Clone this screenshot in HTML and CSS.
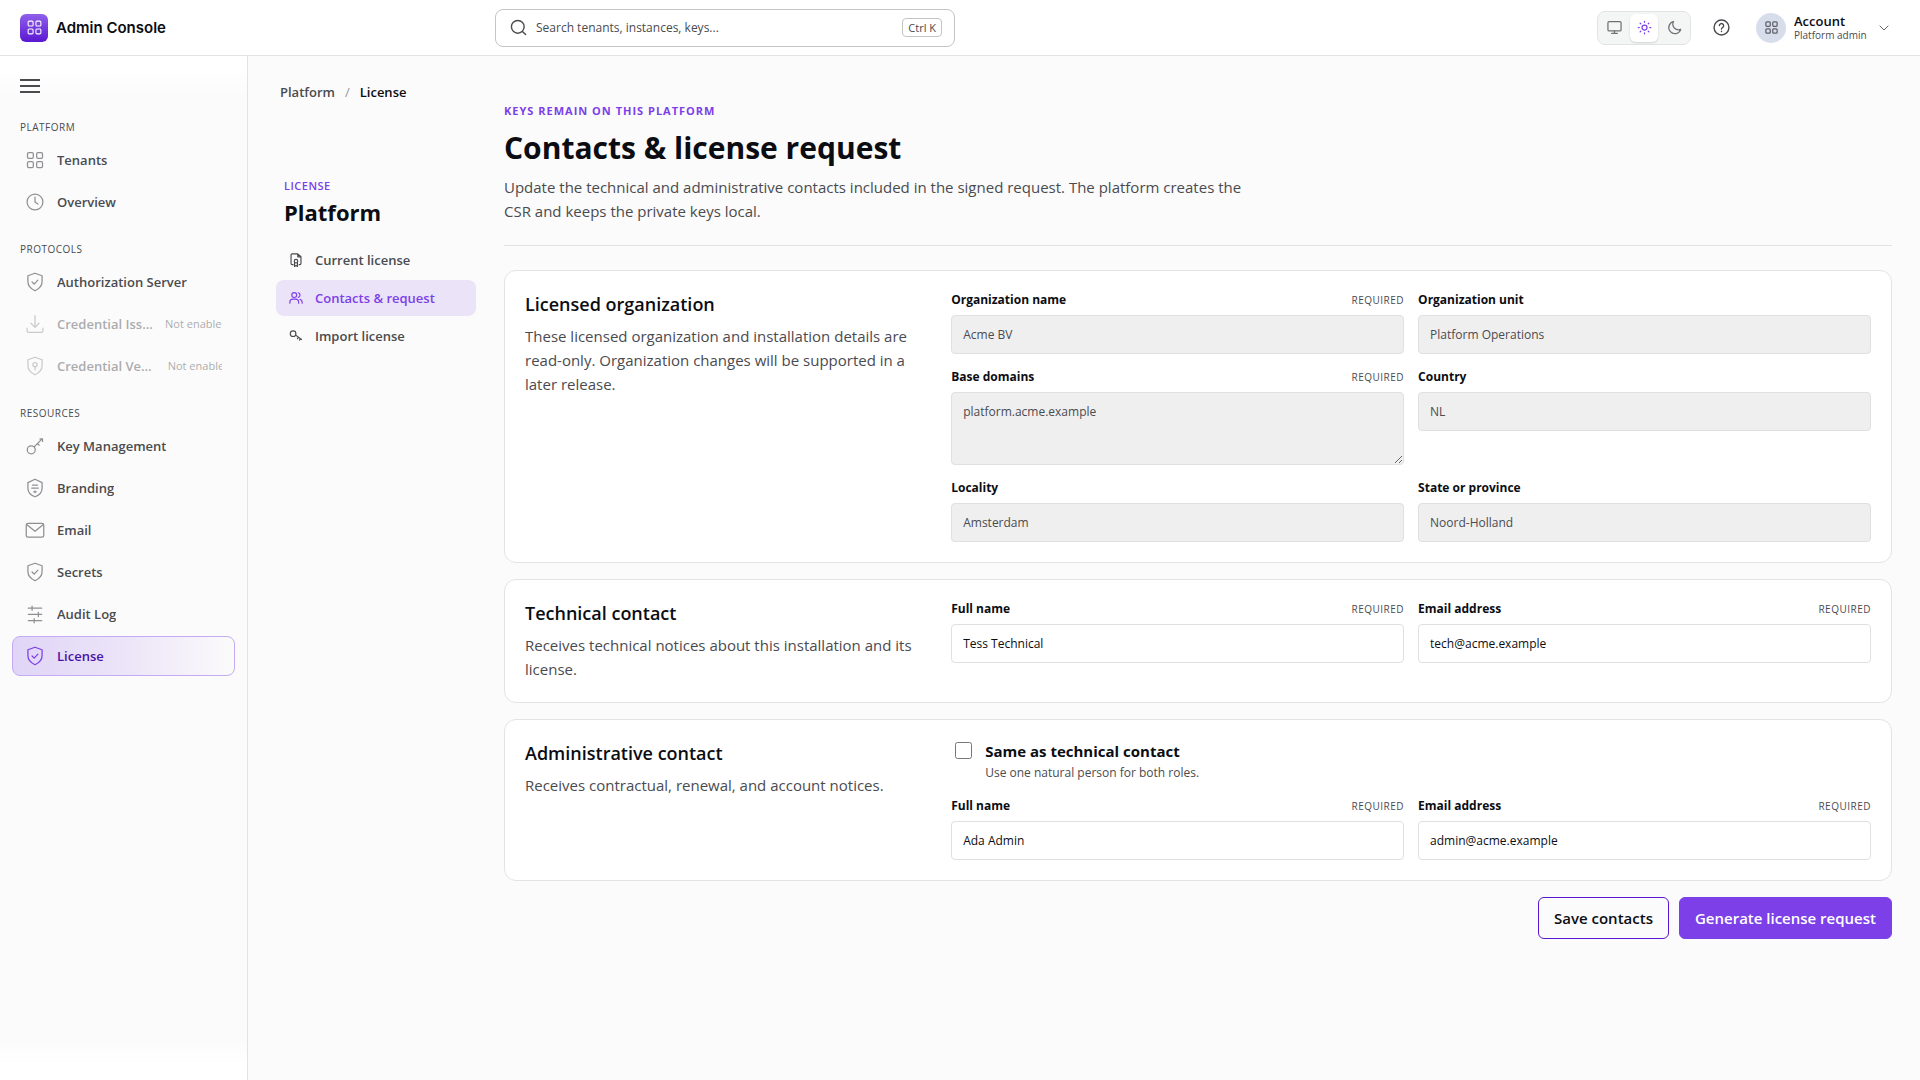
FILE: index.html
```html
<!DOCTYPE html>
<html lang="en">
<head>
    <meta charset="UTF-8">
    <meta name="viewport" content="width=device-width, initial-scale=1.0">
    <title>Contacts &amp; license request - Admin Console</title>
    <link rel="stylesheet" href="styles.css">
</head>
<body>
    <!-- shared icons -->
    <svg class="sprite" aria-hidden="true">
        <symbol id="icon-grid" viewBox="0 0 24 24">
            <rect x="3" y="3" width="7" height="7" rx="1.5"/>
            <rect x="14" y="3" width="7" height="7" rx="1.5"/>
            <rect x="3" y="14" width="7" height="7" rx="1.5"/>
            <rect x="14" y="14" width="7" height="7" rx="1.5"/>
        </symbol>
        <symbol id="icon-shield-check" viewBox="0 0 24 24">
            <path d="M12 1.500l8.500 3v7c0 5-3.200 8.700-8.500 11-5.300-2.300-8.500-6-8.500-11v-7z"/>
            <path d="M8.500 12l2.500 2.500 4.500-4.700"/>
        </symbol>
    </svg>

    <header class="topbar">
        <a class="brand" href="#">
            <span class="brand-mark"><svg class="icon"><use href="#icon-grid"/></svg></span>
            Admin Console
        </a>
        <div class="search">
            <svg class="icon" viewBox="0 0 24 24"><circle cx="11" cy="11" r="9"/><path d="M17.500 17.500L22 22"/></svg>
            <input type="search" placeholder="Search tenants, instances, keys..." aria-label="Search">
            <kbd>Ctrl K</kbd>
        </div>
        <div class="topbar-actions">
            <div class="theme-switch">
                <button type="button" aria-label="System theme">
                    <svg class="icon" viewBox="0 0 24 24"><rect x="1.500" y="2.500" width="21" height="15" rx="2"/><path d="M12 17.500v4M7.500 21.500h9"/></svg>
                </button>
                <button type="button" class="active" aria-label="Light theme">
                    <svg class="icon" viewBox="0 0 24 24"><circle cx="12" cy="12" r="4"/><path d="M12 2v1.500M12 20.500V22M2 12h1.500M20.500 12H22M5 5l1 1M18 18l1 1M5 19l1-1M18 6l1-1"/></svg>
                </button>
                <button type="button" aria-label="Dark theme">
                    <svg class="icon" viewBox="0 0 24 24"><path d="M10.500 2.500a9.800 9.800 0 1 0 11.500 12.500A9 9 0 0 1 10.500 2.500z"/></svg>
                </button>
            </div>
            <button type="button" class="help" aria-label="Help">
                <svg class="icon" viewBox="0 0 24 24"><circle cx="12" cy="12" r="10.500"/><path d="M9 9.300a3 3 0 1 1 4.500 2.700c-1 .6-1.500 1.100-1.500 2.200M12 17.300v.4"/></svg>
            </button>
            <button type="button" class="account">
                <span class="avatar"><svg class="icon"><use href="#icon-grid"/></svg></span>
                <span class="account-text">
                    <span class="account-name">Account</span>
                    <span class="account-role">Platform admin</span>
                </span>
                <svg class="icon chevron" viewBox="0 0 24 24"><path d="M5 8.500l7 7 7-7"/></svg>
            </button>
        </div>
    </header>

    <div class="layout">
        <aside class="sidebar">
            <button type="button" class="menu-toggle" aria-label="Toggle navigation">
                <svg viewBox="0 0 20 24"><path d="M0 6h20M0 12h20M0 18h20"/></svg>
            </button>

            <nav>
                <h2 class="nav-title">Platform</h2>
                <a class="nav-item" href="#">
                    <svg class="icon"><use href="#icon-grid"/></svg>
                    <span class="nav-label">Tenants</span>
                </a>
                <a class="nav-item" href="#">
                    <svg class="icon" viewBox="0 0 24 24"><circle cx="12" cy="12" r="9.500"/><path d="M12 6v6l3.500 2.500"/></svg>
                    <span class="nav-label">Overview</span>
                </a>

                <h2 class="nav-title">Protocols</h2>
                <a class="nav-item" href="#">
                    <svg class="icon"><use href="#icon-shield-check"/></svg>
                    <span class="nav-label">Authorization Server</span>
                </a>
                <a class="nav-item disabled" aria-disabled="true">
                    <svg class="icon" viewBox="0 0 24 24"><path d="M12 2v14M7 11l5 5 5-5M2.500 17v3a2 2 0 0 0 2 2h15a2 2 0 0 0 2-2v-3"/></svg>
                    <span class="nav-label">Credential Issuer</span>
                    <span class="nav-note">Not enabled</span>
                </a>
                <a class="nav-item disabled" aria-disabled="true">
                    <svg class="icon" viewBox="0 0 24 24"><path d="M12 1.500l8.500 3v7c0 5-3.200 8.700-8.500 11-5.300-2.300-8.500-6-8.500-11v-7z"/><circle cx="12" cy="10.500" r="2.500"/><path d="M12 13v3.500"/></svg>
                    <span class="nav-label">Credential Verifier</span>
                    <span class="nav-note">Not enabled</span>
                </a>

                <h2 class="nav-title">Resources</h2>
                <a class="nav-item" href="#">
                    <svg class="icon" viewBox="0 0 24 24"><circle cx="7.500" cy="16.500" r="4.800"/><path d="M11 13L20.500 3.500M15 9l2 2M18 3.500h3V6.500"/></svg>
                    <span class="nav-label">Key Management</span>
                </a>
                <a class="nav-item" href="#">
                    <svg class="icon" viewBox="0 0 24 24"><path d="M12 1.500l8.500 4v6.500c0 5-3.200 8.700-8.500 10.500-5.300-1.800-8.500-5.500-8.500-10.500V5.500z"/><path d="M9 8.500h6M8 12h8M12 15.500v2M10.500 16.500h3"/></svg>
                    <span class="nav-label">Branding</span>
                </a>
                <a class="nav-item" href="#">
                    <svg class="icon" viewBox="0 0 24 24"><rect x="1.500" y="4" width="21" height="16.500" rx="2"/><path d="M2 5.500l10 8 10-8"/></svg>
                    <span class="nav-label">Email</span>
                </a>
                <a class="nav-item" href="#">
                    <svg class="icon"><use href="#icon-shield-check"/></svg>
                    <span class="nav-label">Secrets</span>
                </a>
                <a class="nav-item" href="#">
                    <svg class="icon" viewBox="0 0 24 24"><path d="M4 5h16M4 12.500h16M4 20h16M8.500 2.500v5M16 10v5M11 17.500v5"/></svg>
                    <span class="nav-label">Audit Log</span>
                </a>
                <a class="nav-item active" href="#" aria-current="page">
                    <svg class="icon"><use href="#icon-shield-check"/></svg>
                    <span class="nav-label">License</span>
                </a>
            </nav>
        </aside>

        <main>
            <nav class="breadcrumb" aria-label="Breadcrumb">
                <a href="#">Platform</a>
                <span class="separator">/</span>
                <span class="current">License</span>
            </nav>

            <div class="page">
                <nav class="subnav">
                    <p class="eyebrow">License</p>
                    <h2>Platform</h2>
                    <a class="subnav-item" href="#">
                        <svg class="icon" viewBox="0 0 24 24"><path d="M7 20H5.500a2 2 0 0 1-2-2V3.500a2 2 0 0 1 2-2H15l5.500 5V18a2 2 0 0 1-2 2H17.500M15 1.500v5h5.500"/><circle cx="12" cy="14" r="3"/><path d="M9.500 16.500V23l2.500-1.500 2.500 1.500v-6.500"/></svg>
                        Current license
                    </a>
                    <a class="subnav-item active" href="#">
                        <svg class="icon" viewBox="0 0 24 24"><circle cx="9" cy="7" r="4.200"/><path d="M1.500 21v-2c0-3 2-5 5-5h5c3 0 5 2 5 5v2M16 3a4.200 4.200 0 0 1 0 8M19 14.300c2.200.7 3.500 2.500 3.500 4.700v2"/></svg>
                        Contacts &amp; request
                    </a>
                    <a class="subnav-item" href="#">
                        <svg class="icon" viewBox="0 0 24 24"><circle cx="7" cy="8" r="4.800"/><path d="M11.500 10.500l10 7.500M16 14l-1.500 2.500M19.500 16.500L18 19"/></svg>
                        Import license
                    </a>
                </nav>

                <form class="content" id="contactsForm">
                    <header class="page-header">
                        <p class="eyebrow wide">Keys remain on this platform</p>
                        <h1>Contacts &amp; license request</h1>
                        <p class="description">Update the technical and administrative contacts included in the signed request. The platform creates the CSR and keeps the private keys local.</p>
                    </header>

                    <section class="card">
                        <div class="card-intro">
                            <h2>Licensed organization</h2>
                            <p>These licensed organization and installation details are read-only. Organization changes will be supported in a later release.</p>
                        </div>
                        <div class="fields">
                            <div class="form-group">
                                <div class="label-row"><label for="orgName">Organization name</label><span class="required">Required</span></div>
                                <input type="text" id="orgName" value="Acme BV" readonly>
                            </div>
                            <div class="form-group">
                                <div class="label-row"><label for="orgUnit">Organization unit</label></div>
                                <input type="text" id="orgUnit" value="Platform Operations" readonly>
                            </div>
                            <div class="form-group">
                                <div class="label-row"><label for="domains">Base domains</label><span class="required">Required</span></div>
                                <textarea id="domains" rows="2" readonly>platform.acme.example</textarea>
                            </div>
                            <div class="form-group">
                                <div class="label-row"><label for="country">Country</label></div>
                                <input type="text" id="country" value="NL" readonly>
                            </div>
                            <div class="form-group">
                                <div class="label-row"><label for="locality">Locality</label></div>
                                <input type="text" id="locality" value="Amsterdam" readonly>
                            </div>
                            <div class="form-group">
                                <div class="label-row"><label for="state">State or province</label></div>
                                <input type="text" id="state" value="Noord-Holland" readonly>
                            </div>
                        </div>
                    </section>

                    <section class="card">
                        <div class="card-intro">
                            <h2>Technical contact</h2>
                            <p>Receives technical notices about this installation and its license.</p>
                        </div>
                        <div class="fields">
                            <div class="form-group">
                                <div class="label-row"><label for="techName">Full name</label><span class="required">Required</span></div>
                                <input type="text" id="techName" value="Tess Technical" required>
                            </div>
                            <div class="form-group">
                                <div class="label-row"><label for="techEmail">Email address</label><span class="required">Required</span></div>
                                <input type="email" id="techEmail" value="tech@acme.example" required>
                            </div>
                        </div>
                    </section>

                    <section class="card">
                        <div class="card-intro">
                            <h2>Administrative contact</h2>
                            <p>Receives contractual, renewal, and account notices.</p>
                        </div>
                        <div class="fields">
                            <div class="same-contact">
                                <input type="checkbox" id="sameContact">
                                <label for="sameContact">
                                    <span class="same-title">Same as technical contact</span>
                                    <span class="same-hint">Use one natural person for both roles.</span>
                                </label>
                            </div>
                            <div class="form-group">
                                <div class="label-row"><label for="adminName">Full name</label><span class="required">Required</span></div>
                                <input type="text" id="adminName" value="Ada Admin" required>
                            </div>
                            <div class="form-group">
                                <div class="label-row"><label for="adminEmail">Email address</label><span class="required">Required</span></div>
                                <input type="email" id="adminEmail" value="admin@acme.example" required>
                            </div>
                        </div>
                    </section>

                    <div class="form-actions">
                        <button type="button" class="btn">Save contacts</button>
                        <button type="submit" class="btn btn-primary">Generate license request</button>
                    </div>
                </form>
            </div>
        </main>
    </div>
</body>
</html>
```
FILE: styles.css
```css
* {
    box-sizing: border-box;
}

body {
    display: flex;
    flex-direction: column;
    min-height: 100vh;
    margin: 0;
    font-family: "Open Sans", "Noto Sans", sans-serif;
    font-size: 15px;
    line-height: 24px;
    color: #0b0d12;
    background-color: #fbfbfb;
}

h1,
h2,
p {
    margin: 0;
}

a {
    color: inherit;
    text-decoration: none;
}

button,
input,
textarea {
    font-family: inherit;
    color: inherit;
}

button {
    padding: 0;
    border: none;
    background: none;
    cursor: pointer;
}

.sprite {
    display: none;
}

.icon {
    flex: none;
    width: 20px;
    height: 20px;
    fill: none;
    stroke: currentColor;
    stroke-width: 1.5;
    stroke-linecap: round;
    stroke-linejoin: round;
}

/* Top bar */
.topbar {
    display: flex;
    align-items: center;
    height: 56px;
    padding: 0 24px 0 20px;
    background-color: #fff;
    border-bottom: 1px solid #e2e3e4;
}

.brand {
    display: flex;
    align-items: center;
    gap: 8px;
    flex: 0 0 475px;
    font-family: Inter, sans-serif;
    font-size: 15px;
    font-weight: 600;
}

.brand-mark {
    display: grid;
    place-items: center;
    width: 28px;
    height: 28px;
    border-radius: 6px;
    color: #fff;
    background: linear-gradient(#9060ea, #5a17d1);
}

.brand-mark .icon {
    width: 17px;
    height: 17px;
}

.search {
    display: flex;
    align-items: center;
    gap: 9px;
    width: 460px;
    height: 38px;
    padding: 0 12px 0 14px;
    border: 1px solid #c3c4c6;
    border-radius: 8px;
    color: #4a4b4f;
}

.search .icon {
    width: 17px;
    height: 17px;
    stroke-width: 2;
}

.search input {
    flex: 1;
    min-width: 0;
    padding: 0;
    border: none;
    outline: none;
    background: none;
    font-size: 12px;
}

.search input::placeholder {
    color: #4a4b4f;
    opacity: 1;
}

kbd {
    padding: 0 5px;
    border: 1px solid #c3c4c6;
    border-radius: 4px;
    font-family: inherit;
    font-size: 11px;
    line-height: 17px;
}

.topbar-actions {
    display: flex;
    align-items: center;
    gap: 12px;
    margin-left: auto;
}

.theme-switch {
    display: flex;
    gap: 2px;
    padding: 2px;
    border: 1px solid #e2e3e4;
    border-radius: 8px;
    background-color: #f4f6f6;
}

.theme-switch button {
    display: grid;
    place-items: center;
    width: 28px;
    height: 28px;
    border-radius: 6px;
    color: #707175;
}

.theme-switch .active {
    color: #7c3fe8;
    background-color: #fff;
    box-shadow: 0 1px 2px rgba(0, 0, 0, 0.15);
}

.theme-switch .icon {
    width: 15px;
    height: 15px;
    stroke-width: 2;
}

.help {
    display: grid;
    place-items: center;
    width: 36px;
    height: 36px;
    color: #4a4b4f;
}

.help .icon {
    width: 17px;
    height: 17px;
    stroke-width: 2;
}

.account {
    display: flex;
    align-items: center;
    gap: 8px;
    padding: 0 5px;
    text-align: left;
}

.avatar {
    display: grid;
    place-items: center;
    width: 30px;
    height: 30px;
    border-radius: 50%;
    color: #5d6069;
    background-color: #d8ddec;
}

.avatar .icon {
    width: 15px;
    height: 15px;
    stroke-width: 2;
}

.account-text {
    min-width: 75px;
}

.account-name,
.account-role {
    display: block;
    line-height: 14px;
}

.account-name {
    font-size: 13px;
    font-weight: 600;
}

.account-role {
    font-size: 10px;
    color: #4a4b4f;
}

.account .chevron {
    width: 14px;
    height: 14px;
    color: #4a4b4f;
}

/* Sidebar */
.layout {
    display: flex;
    flex: 1;
}

.sidebar {
    flex: 0 0 248px;
    min-width: 0;
    padding: 18px 12px;
    border-right: 1px solid #e2e3e4;
    background: linear-gradient(#fff 0, #fff 12px, #fbfbfb 40px, #fbfbfb calc(100% - 44px), #fff calc(100% - 12px));
}

.menu-toggle {
    display: block;
    margin: 0 8px 21px;
}

.menu-toggle svg {
    display: block;
    width: 20px;
    height: 24px;
    stroke: #4a4b4f;
    stroke-width: 2;
}

.nav-title {
    margin: 19px 8px 5px;
    font-size: 10px;
    font-weight: 500;
    line-height: 16px;
    letter-spacing: 0.5px;
    text-transform: uppercase;
    color: #4a4b4f;
}

.nav-item {
    display: flex;
    align-items: center;
    gap: 12px;
    height: 40px;
    margin-bottom: 2px;
    padding: 0 12px;
    border: 1px solid transparent;
    border-radius: 8px;
    font-size: 13px;
    font-weight: 600;
    color: #4a4b4f;
}

.nav-item .icon {
    color: #8f9094;
}

.nav-label {
    overflow: hidden;
    line-height: 20px;
    text-overflow: ellipsis;
    white-space: nowrap;
}

.nav-note {
    overflow: hidden;
    font-size: 11px;
    font-weight: 400;
    line-height: 20px;
    white-space: nowrap;
}

.nav-item.disabled {
    opacity: 0.45;
}

.nav-item.active {
    border-color: #c5abf4;
    color: #4a12a8;
    background: linear-gradient(90deg, #e0d5f7, #ece4f8 50%, #fbfbfb);
}

.nav-item.active .icon {
    color: #7c3fe8;
}

/* Page */
main {
    flex: 1;
    min-width: 0;
    padding: 26px 28px;
}

.breadcrumb {
    display: flex;
    gap: 10px;
    padding-left: 4px;
    font-size: 13px;
    font-weight: 600;
    line-height: 20px;
    color: #4a4b4f;
}

.breadcrumb .separator {
    font-weight: 400;
    color: #97989b;
}

.breadcrumb .current {
    color: #0b0d12;
}

.page {
    display: grid;
    grid-template-columns: 200px minmax(0, 1fr);
    gap: 28px;
    align-items: start;
}

.eyebrow {
    font-size: 11px;
    font-weight: 600;
    line-height: 18px;
    letter-spacing: 0.5px;
    text-transform: uppercase;
    color: #7c3fe8;
}

.eyebrow.wide {
    font-weight: 700;
    letter-spacing: 1px;
}

.subnav {
    padding-top: 75px;
}

.subnav .eyebrow,
.subnav h2 {
    padding-left: 8px;
}

.subnav h2 {
    margin: 2px 0 15px;
    font-size: 22px;
    line-height: 30px;
}

.subnav-item {
    display: flex;
    align-items: center;
    gap: 12px;
    margin-bottom: 2px;
    padding: 8px 13px;
    border-radius: 8px;
    font-size: 13px;
    font-weight: 600;
    line-height: 20px;
    color: #4a4b4f;
}

.subnav-item .icon {
    width: 14px;
    height: 14px;
    stroke-width: 2;
}

.subnav-item.active {
    color: #7c3fe8;
    background-color: #ebe3f8;
}

.page-header {
    margin-bottom: 24px;
    padding-bottom: 22px;
    border-bottom: 1px solid #e2e3e4;
}

.page-header h1 {
    margin: 8px 0 7px;
    font-size: 30px;
    line-height: 40px;
}

.description {
    max-width: 760px;
    color: #4a4b4f;
}

/* Cards */
.card {
    display: grid;
    grid-template-columns: minmax(0, 3fr) minmax(0, 7fr);
    gap: 32px;
    margin-bottom: 16px;
    padding: 20px;
    border: 1px solid #e2e3e4;
    border-radius: 12px;
    background-color: #fff;
}

.card-intro h2 {
    margin-bottom: 7px;
    font-size: 18px;
    font-weight: 600;
    line-height: 26px;
}

.card-intro p {
    padding-bottom: 1px;
    color: #4a4b4f;
}

.fields {
    display: grid;
    grid-template-columns: repeat(2, minmax(0, 1fr));
    gap: 14px;
    align-items: start;
    align-content: start;
}

.label-row {
    display: flex;
    justify-content: space-between;
    margin-bottom: 6px;
    line-height: 18px;
}

.label-row label {
    font-size: 12px;
    font-weight: 700;
}

.required {
    font-size: 10px;
    letter-spacing: 0.5px;
    text-transform: uppercase;
    color: #4a4b4f;
}

.form-group input,
.form-group textarea {
    display: block;
    width: 100%;
    padding: 9px 11px;
    border: 1px solid #e0e0e2;
    border-radius: 4px;
    background-color: #fff;
    font-size: 12px;
    line-height: 19px;
}

.form-group textarea {
    min-height: 73px;
    resize: vertical;
}

.form-group input:read-only,
.form-group textarea:read-only {
    color: #4a4b4f;
    background-color: #efefef;
}

.same-contact {
    display: flex;
    grid-column: 1 / -1;
    gap: 13px;
    padding-left: 4px;
}

.same-contact input {
    flex: none;
    width: 17px;
    height: 17px;
    margin: 2px 0 0;
}

.same-title,
.same-hint {
    display: block;
}

.same-title {
    font-size: 15px;
    font-weight: 700;
    line-height: 23px;
}

.same-hint {
    font-size: 12px;
    line-height: 20px;
    color: #4a4b4f;
}

.form-actions {
    display: flex;
    justify-content: flex-end;
    gap: 10px;
}

.btn {
    height: 42px;
    padding: 0 15px;
    border: 1px solid #5a17d1;
    border-radius: 6px;
    font-size: 15px;
    font-weight: 600;
}

.btn-primary {
    border-color: #7c3fe8;
    color: #fff;
    background-color: #7c3fe8;
}
```
